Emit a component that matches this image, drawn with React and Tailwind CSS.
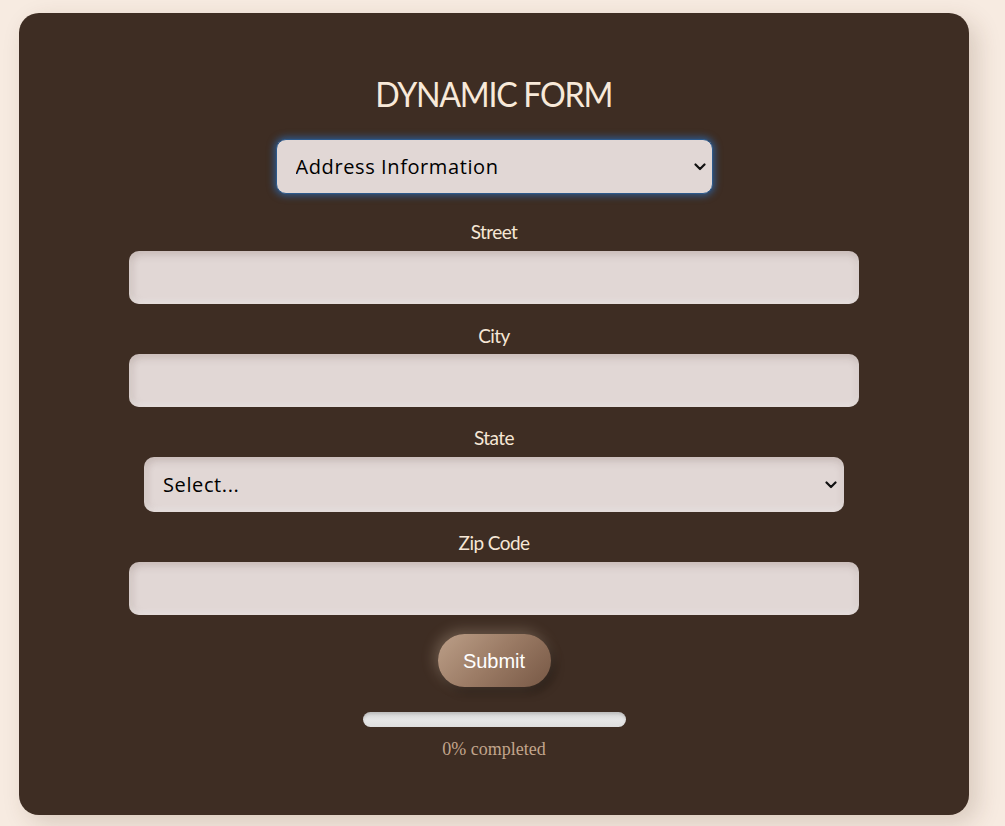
import React from "react";

function Chevron() {
  return (
    <svg width="12" height="8" viewBox="0 0 12 8" fill="none" className="pointer-events-none absolute right-[7px] top-1/2 -translate-y-1/2">
      <path d="M1.5 1.5 L6 6 L10.5 1.5" stroke="#111" strokeWidth="2.2" strokeLinecap="round" strokeLinejoin="round" />
    </svg>
  );
}

function Label({ children, className = "" }) {
  return (
    <label className={"block text-center text-[19px] leading-[24px] tracking-[-0.03em] text-[#f6e7d6] [font-family:Lato,'Noto_Sans',sans-serif] " + className}>
      {children}
    </label>
  );
}

const fieldShadow =
  "shadow-[inset_0_4px_9px_rgba(60,30,20,0.13),inset_4px_0_8px_rgba(60,30,20,0.06),inset_0_-3px_5px_rgba(255,255,255,0.45)]";

function Input({ className = "" }) {
  return (
    <input
      type="text"
      className={"block h-[53px] w-[730px] rounded-[10px] bg-[#e1d7d5] outline-none " + fieldShadow + " " + className}
    />
  );
}

export default function App() {
  return (
    <div className="min-h-[826px] w-full bg-[#f7ebe1] pt-[13px] pb-[11px]">
      <div className="ml-[19px] flex h-[802px] w-[950px] flex-col items-center rounded-[20px] bg-[#3e2d23] pt-[59px] shadow-[8px_8px_25px_rgba(80,50,30,0.18)]">
        <h1 className="text-[35px] leading-[43px] tracking-[-0.04em] text-[#f8e9d9] [font-family:Lato,'Noto_Sans',sans-serif] [transform:scaleX(0.92)]">
          DYNAMIC FORM
        </h1>

        <div className="relative mt-[24px] h-[55px] w-[437px]">
          <select className="h-full w-full appearance-none rounded-[10px] border border-[#2d5a8c] bg-[#e1d7d5] pl-[19px] text-[20px] tracking-[0.03em] text-black outline-none shadow-[0_0_7px_2px_rgba(40,110,190,0.65)] [font-family:'Open_Sans','Noto_Sans',sans-serif]">
            <option>Address Information</option>
          </select>
          <Chevron />
        </div>

        <Label className="mt-[26px]">Street</Label>
        <Input className="mt-[7px]" />

        <Label className="mt-[20px]">City</Label>
        <Input className="mt-[6px]" />

        <Label className="mt-[19px]">State</Label>
        <div className="relative mt-[7px] h-[55px] w-[700px]">
          <select className={"h-full w-full appearance-none rounded-[10px] bg-[#e1d7d5] pl-[19px] text-[20px] tracking-[0.03em] text-black outline-none [font-family:'Open_Sans','Noto_Sans',sans-serif] " + fieldShadow}>
            <option>Select...</option>
          </select>
          <Chevron />
        </div>

        <Label className="mt-[19px]">Zip Code</Label>
        <Input className="mt-[7px]" />

        <button className="mt-[19px] h-[53px] w-[113px] rounded-full bg-[linear-gradient(135deg,#bc9f88_0%,#9a7a64_50%,#775845_100%)] text-[20px] text-white shadow-[-3px_-3px_14px_rgba(255,230,205,0.25),4px_5px_10px_rgba(0,0,0,0.35)] [font-family:'Liberation_Sans',Arial,sans-serif]">
          Submit
        </button>

        <div className="mt-[25px] h-[15px] w-[263px] rounded-full bg-[linear-gradient(180deg,#d4d4d4_0%,#e6e6e6_55%,#dedede_100%)] shadow-[inset_0_2px_3px_rgba(0,0,0,0.12)]" />

        <div className="mt-[12px] text-[18px] leading-[20px] text-[#c2a58c] [font-family:'Liberation_Serif',serif] font-light">
          0% completed
        </div>
      </div>
    </div>
  );
}
